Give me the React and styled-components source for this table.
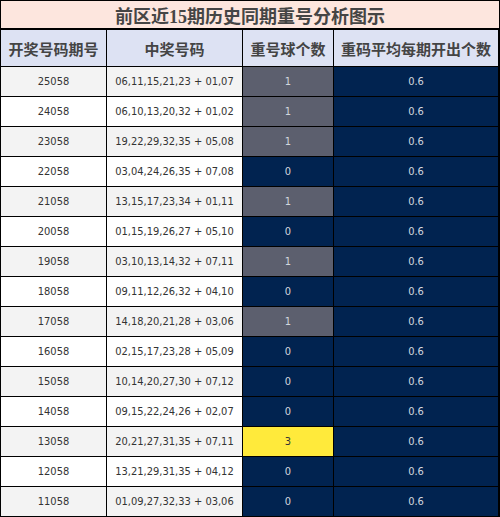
import React from 'react'
import styled, { createGlobalStyle } from 'styled-components'

const GlobalStyle = createGlobalStyle`
    body {
        margin: 0;
        background: #ffffff;
    }
`;

const rows = [
    ['25058', '06,11,15,21,23 + 01,07', 1],
    ['24058', '06,10,13,20,32 + 01,02', 1],
    ['23058', '19,22,29,32,35 + 05,08', 1],
    ['22058', '03,04,24,26,35 + 07,08', 0],
    ['21058', '13,15,17,23,34 + 01,11', 1],
    ['20058', '01,15,19,26,27 + 05,10', 0],
    ['19058', '03,10,13,14,32 + 07,11', 1],
    ['18058', '09,11,12,26,32 + 04,10', 0],
    ['17058', '14,18,20,21,28 + 03,06', 1],
    ['16058', '02,15,17,23,28 + 05,09', 0],
    ['15058', '10,14,20,27,30 + 07,12', 0],
    ['14058', '09,15,22,24,26 + 02,07', 0],
    ['13058', '20,21,27,31,35 + 07,11', 3],
    ['12058', '13,21,29,31,35 + 04,12', 0],
    ['11058', '01,09,27,32,33 + 03,06', 0],
];

const Chart = styled.div`
    width: 500px;
    height: 517px;
    overflow: hidden;
    box-sizing: border-box;
    background: #000;
    padding: 1px 1px 0 1px;
`;

const Title = styled.div`
    height: 27px;
    background: #fde6de;
    color: #454545;
    font-family: "Liberation Serif", "Noto Sans CJK SC", serif;
    font-weight: 700;
    font-size: 18px;
    display: flex;
    align-items: center;
    justify-content: center;
    margin-bottom: 2px;
`;

const Grid = styled.div`
    display: grid;
    grid-template-columns: 105px 135px 90px 164px;
    grid-template-rows: 36px;
    grid-auto-rows: 29px;
    gap: 1px;
`;

const HeadCell = styled.div`
    background: #dde2f3;
    color: #444;
    font-family: "Noto Sans CJK SC", sans-serif;
    font-weight: 700;
    font-size: 15px;
    display: flex;
    align-items: center;
    justify-content: center;
`;

const Cell = styled.div`
    background: ${p => (p.odd ? '#f3f3f3' : '#ffffff')};
    color: #333;
    font-family: "DejaVu Sans Condensed", "DejaVu Sans", sans-serif;
    font-stretch: condensed;
    font-size: 11px;
    display: flex;
    align-items: center;
    justify-content: center;
`;

const countColor = n => (n >= 3 ? '#ffea3b' : n === 1 ? '#5c5f6e' : '#012350');

const CountCell = styled(Cell)`
    background: ${p => countColor(p.n)};
    color: ${p => (p.n >= 3 ? '#333' : '#d2d6de')};
`;

const AvgCell = styled(Cell)`
    background: #012350;
    color: #d2d6de;
`;

export default function App() {
    return (
        <>
            <GlobalStyle />
            <Chart>
                <Title>前区近15期历史同期重号分析图示</Title>
                <Grid>
                    <HeadCell>开奖号码期号</HeadCell>
                    <HeadCell>中奖号码</HeadCell>
                    <HeadCell>重号球个数</HeadCell>
                    <HeadCell>重码平均每期开出个数</HeadCell>
                    {rows.map(([issue, nums, n], i) => (
                        <React.Fragment key={issue}>
                            <Cell odd={i % 2 === 0}>{issue}</Cell>
                            <Cell odd={i % 2 === 0}>{nums}</Cell>
                            <CountCell n={n}>{n}</CountCell>
                            <AvgCell>0.6</AvgCell>
                        </React.Fragment>
                    ))}
                </Grid>
            </Chart>
        </>
    )
}
